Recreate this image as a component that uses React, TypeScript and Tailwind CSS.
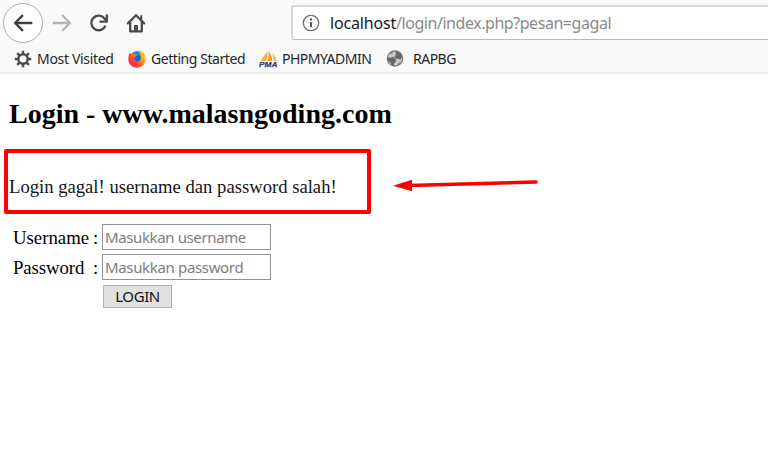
import { ReactNode } from "react";

interface Bookmark {
  label: string;
  icon: ReactNode;
  iconClass: string;
  labelClass: string;
}

function BackIcon() {
  return (
    <svg className="w-5 h-5" viewBox="0 0 20 20" fill="none" stroke="#3f3f40" strokeWidth={2.4} strokeLinecap="round" strokeLinejoin="round">
      <path d="M18.3 10H2.4M9.2 2.8L2.1 10l7.1 7.2" />
    </svg>
  );
}

function ForwardIcon() {
  return (
    <svg className="w-5 h-5" viewBox="0 0 20 20" fill="none" stroke="#b5b5b6" strokeWidth={2.3} strokeLinecap="round" strokeLinejoin="round">
      <path d="M1.6 10h16M10.8 2.8l7.1 7.2-7.1 7.2" />
    </svg>
  );
}

function ReloadIcon() {
  return (
    <svg className="w-5 h-5" viewBox="0 0 20 20" fill="none" stroke="#4a4a4b" strokeWidth={2.4} strokeLinecap="round" strokeLinejoin="round">
      <path d="M16 13.6A7.3 7.3 0 1 1 15.6 5.6L17.4 8" />
      <path d="M17.8 2.4v6.2h-6.3" />
    </svg>
  );
}

function HomeIcon() {
  return (
    <svg className="w-5 h-5" viewBox="0 0 20 20" fill="none" stroke="#4a4a4b" strokeWidth={2.3} strokeLinecap="round" strokeLinejoin="round">
      <path d="M1.9 10.4L10 2.3l8.1 8.1" />
      <path d="M4.2 9.5v8.9h11.6V9.5" />
      <path d="M15.2 3v3.5" strokeWidth={2} />
      <path d="M8 18v-6h4v6z" fill="#4a4a4b" stroke="none" />
    </svg>
  );
}

function GearIcon() {
  return (
    <svg className="w-[18px] h-[18px]" viewBox="0 0 18 18" fill="none" stroke="#4c4c4d">
      <circle cx="9" cy="9" r="4.7" strokeWidth={2.4} />
      <path
        d="M9 4V.8M9 14v3.2M4 9H.8M14 9h3.2M5.4 5.4L3.2 3.2M12.6 5.4l2.2-2.2M5.4 12.6l-2.2 2.2M12.6 12.6l2.2 2.2"
        strokeWidth={2.5}
      />
    </svg>
  );
}

function FirefoxIcon() {
  return (
    <svg className="w-[18px] h-[18px]" viewBox="0 0 18 18">
      <defs>
        <linearGradient id="fox" x1="1" y1="0.1" x2="0.1" y2="0.9">
          <stop offset="0" stopColor="#ffe226" />
          <stop offset="0.35" stopColor="#ffa51e" />
          <stop offset="0.65" stopColor="#ff4b2b" />
          <stop offset="1" stopColor="#f01a67" />
        </linearGradient>
      </defs>
      <circle cx="9" cy="8" r="6.8" fill="#1266d6" />
      <path
        d="M1.2 3.2c.5-.2 1 .1 1.4.6 1-.6 2-.5 2.9-.1L7.2 3c-.3 1 .2 1.8 1.7 2.2-.3 1-1.3 1.3-2 1.7.1 1.3-.5 1.8-.6 2.2.6 2.6 3.4 3.1 5 1.8 1.8-1.4 2-4.6.1-7.1C10.5 2.4 10 1.3 11.2.3c4.3 1.1 6.6 4.5 6.5 8.7-.1 5-3.9 8.7-8.7 8.7S.3 14 .3 9c0-2.2.4-4.1.9-5.8z"
        fill="url(#fox)"
      />
      <path d="M5.5 3.2C7 1.6 9.5 1 11.4 2l1 2.7-2 .7-2.4-.5z" fill="#1593e8" />
    </svg>
  );
}

function PmaIcon() {
  return (
    <svg className="w-[19px] h-[18px]" viewBox="0 0 19 18">
      <path d="M8.2 1.2C5.8 5 3 8.5 1.5 11h5.8c.9-2.9 1.3-6.4.9-9.8z" fill="#f9ab4e" />
      <path d="M9.3.4c.7 4 .4 7.5-.8 10.6h4.8c-.3-4.3-1.6-7.9-4-10.6z" fill="#f59a20" />
      <path d="M13.3 3.2c1.1 2.5 1.5 5 1.4 7.8h2.8c-.8-3.2-2.2-5.8-4.2-7.8z" fill="#f6a640" />
      <text
        x="0"
        y="17"
        textLength="18.5"
        lengthAdjust="spacingAndGlyphs"
        className="font-['Liberation_Sans'] text-[7.5px] font-bold italic"
        fill="#363a61"
        stroke="#363a61"
        strokeWidth={0.25}
      >
        PMA
      </text>
    </svg>
  );
}

function GlobeIcon() {
  return (
    <svg className="w-[18px] h-[18px]" viewBox="0 0 18 18">
      <circle cx="9" cy="8.5" r="7.7" fill="#c9cacc" stroke="#77787a" strokeWidth={1.2} />
      <path d="M9.2 1.2c3.5 0 6 2.2 7 5.2l-1.3 3.2-2.1-.6-2.6-.2-1.7-2 1.5-2.2z" fill="#66676a" />
      <path d="M1.5 7.2l3 .5 2.8-.9 2.4 2.1.4 2.6-2 2.2-.3 2.2-2-.3-1.3-3-2.6-1.6z" fill="#66676a" />
      <path d="M2.8 4l3-2.3 1.6.3-1.9 2z" fill="#808184" />
      <path d="M11 14.5l3-2.4 1-.2-2 3.2z" fill="#808184" />
    </svg>
  );
}

function InfoIcon() {
  return (
    <svg className="w-[18px] h-[18px]" viewBox="0 0 18 18" fill="none">
      <circle cx="9" cy="9" r="7.7" stroke="#6f6f70" strokeWidth={1.3} />
      <path d="M9 8v5.2" stroke="#5d5d5e" strokeWidth={2} />
      <circle cx="9" cy="5.5" r="1.2" fill="#5d5d5e" />
    </svg>
  );
}

const bookmarks: Bookmark[] = [
  { label: "Most Visited", icon: <GearIcon />, iconClass: "w-[23px]", labelClass: "w-[91px] tracking-[-0.32px]" },
  { label: "Getting Started", icon: <FirefoxIcon />, iconClass: "w-[23px]", labelClass: "w-[108px] tracking-[-0.44px]" },
  { label: "PHPMYADMIN", icon: <PmaIcon />, iconClass: "w-[23px]", labelClass: "w-[104px] tracking-[-0.5px]" },
  { label: "RAPBG", icon: <GlobeIcon />, iconClass: "w-[27px]", labelClass: "tracking-[-0.5px]" },
];

function BrowserChrome() {
  return (
    <header className="h-[74px] bg-[#f9f9fa] border-b-2 border-[#ececed]">
      <div className="flex h-[45px] items-center">
        <button className="ml-[3px] flex h-10 w-10 items-center justify-center rounded-full border border-[#adadae] bg-white">
          <BackIcon />
        </button>
        <button className="ml-[9px]"><ForwardIcon /></button>
        <button className="ml-[17px]"><ReloadIcon /></button>
        <button className="ml-[17px]"><HomeIcon /></button>
        <div className="ml-[145px] flex h-[35px] flex-1 items-center rounded-l-[3px] border-2 border-r-0 border-b border-[#d7d7d8] border-b-[#b9b9ba] bg-white pl-[9px]">
          <InfoIcon />
          <span className="ml-[10px] pb-px text-[16px] leading-none tracking-[-0.45px] whitespace-nowrap text-[#8a8a8b]">
            <span className="tracking-[-0.18px] text-[#18181a]">localhost</span>/login/index.php?pesan=gagal
          </span>
        </div>
      </div>
      <nav className="flex h-[27px] items-center pl-[14px] text-[14px] text-[#252526]">
        {bookmarks.map((item) => (
          <a key={item.label} className="flex items-center">
            <span className={item.iconClass}>{item.icon}</span>
            <span className={`whitespace-nowrap ${item.labelClass}`}>{item.label}</span>
          </a>
        ))}
      </nav>
    </header>
  );
}

function LoginForm() {
  const field =
    "h-[26px] w-[169px] border border-[#929293] bg-white px-[2px] text-[15px] leading-none text-[#222] placeholder:text-[#7d7d7e] placeholder:opacity-100";

  return (
    <form className="ml-[13px] mt-[10px] grid w-[260px] grid-cols-[80px_9px_169px] grid-rows-[26px_26px_24px] gap-y-1 text-[18.8px]">
      <label className="leading-[27px]">Username</label>
      <span className="leading-[27px]">:</span>
      <input className={`${field} font-['Noto_Sans',sans-serif] tracking-[-0.38px]`} placeholder="Masukkan username" />
      <label className="leading-[27px] tracking-[-0.1px]">Password</label>
      <span className="leading-[27px]">:</span>
      <input className={`${field} font-['Noto_Sans',sans-serif] tracking-[-0.34px]`} placeholder="Masukkan password" />
      <button
        type="button"
        className="col-start-3 ml-px mt-px h-[23px] w-[69px] border border-[#b0b0b1] bg-[#e1e1e1] font-['Noto_Sans',sans-serif] text-[15px] leading-none tracking-[-0.4px] text-[#111]"
      >
        LOGIN
      </button>
    </form>
  );
}

export default function App() {
  return (
    <div className="h-[449px] w-[768px] overflow-hidden bg-white font-['Noto_Sans',sans-serif]">
      <BrowserChrome />
      <main className="font-['Liberation_Serif',serif] text-black">
        <h2 className="ml-[9px] pt-6 text-[28px] leading-8 font-bold whitespace-nowrap">Login - www.malasngoding.com</h2>

        {/* Error message with its red callout */}
        <div className="ml-1 mt-[19px] flex items-start">
          <div className="h-[65px] w-[367px] rounded-[2px] border-4 border-[#fd0002] pl-[1px] pt-[22px] text-[18.65px] leading-6 whitespace-nowrap text-[#151515]">
            Login gagal! username dan password salah!
          </div>
          <svg className="ml-[20px] mt-[27px] h-4 w-[150px]" viewBox="0 0 150 16">
            <path d="M17 9.5L145 6" stroke="#fd0002" strokeWidth={3.6} strokeLinecap="round" />
            <path d="M2 9.7l19-6v11.5z" fill="#fd0002" />
          </svg>
        </div>

        <LoginForm />
      </main>
    </div>
  );
}
